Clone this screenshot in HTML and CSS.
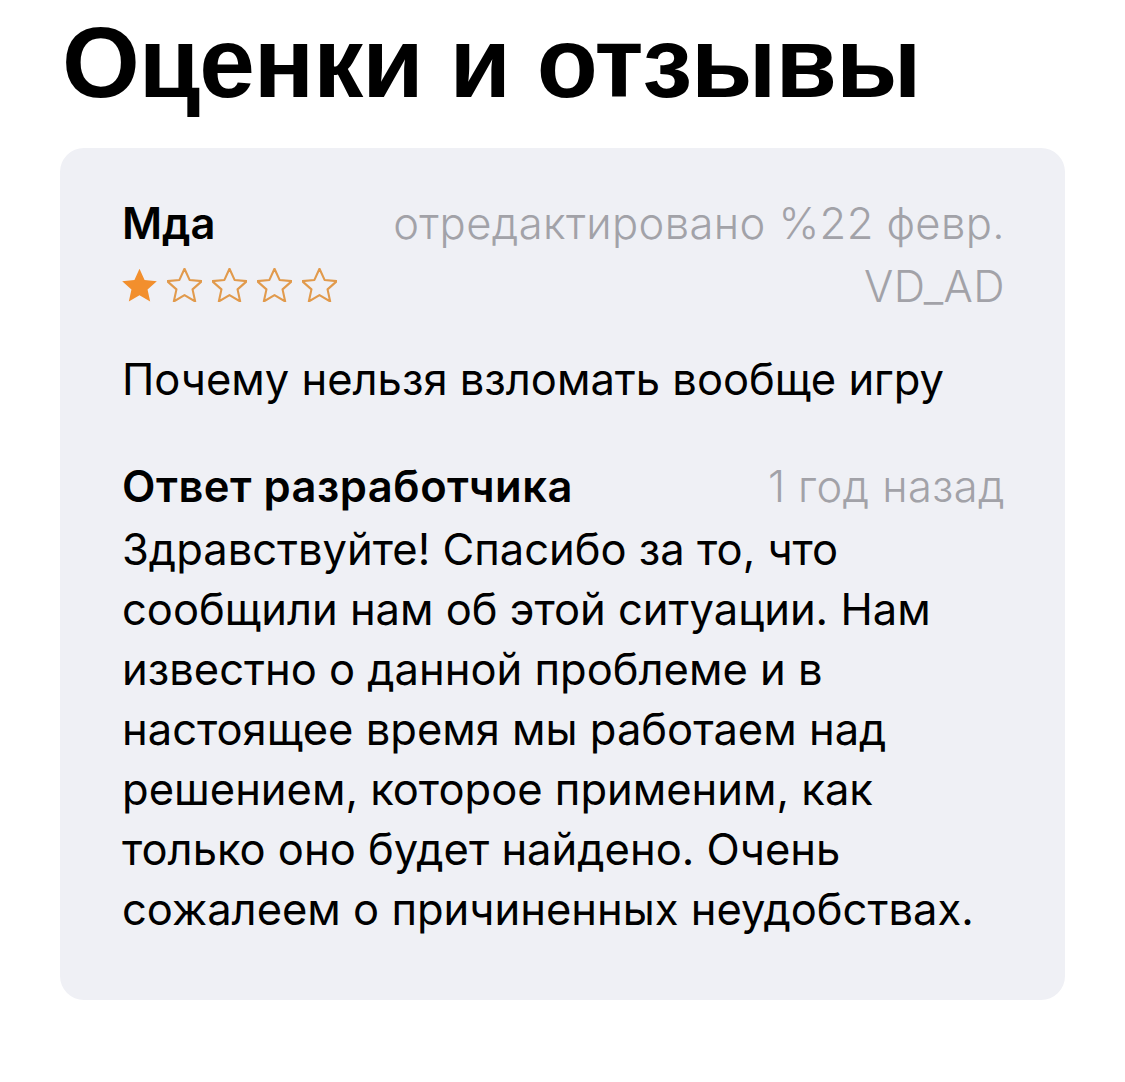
FILE: index.html
```html
<!DOCTYPE html>
<html lang="ru">
<head>
    <meta charset="UTF-8">
    <meta name="viewport" content="width=device-width, initial-scale=1.0">
    <title>Оценки и отзывы</title>
    <link rel="stylesheet" href="styles.css">
</head>
<body>
    <h1 class="page-title">Оценки и отзывы</h1>

    <div class="review-card">
        <div class="review-head">
            <div class="review-left">
                <div class="review-title">Мда</div>
                <div class="stars">
                    <svg class="star" viewBox="2 2 20 19"><path class="full" d="M12 2.2l2.9 6.4 7 .7-5.3 4.7 1.5 6.9L12 17.3l-6.1 3.6 1.5-6.9L2.1 9.3l7-.7z"/></svg>
                    <svg class="star" viewBox="2 2 20 19"><path class="empty" d="M12 2.2l2.9 6.4 7 .7-5.3 4.7 1.5 6.9L12 17.3l-6.1 3.6 1.5-6.9L2.1 9.3l7-.7z"/></svg>
                    <svg class="star" viewBox="2 2 20 19"><path class="empty" d="M12 2.2l2.9 6.4 7 .7-5.3 4.7 1.5 6.9L12 17.3l-6.1 3.6 1.5-6.9L2.1 9.3l7-.7z"/></svg>
                    <svg class="star" viewBox="2 2 20 19"><path class="empty" d="M12 2.2l2.9 6.4 7 .7-5.3 4.7 1.5 6.9L12 17.3l-6.1 3.6 1.5-6.9L2.1 9.3l7-.7z"/></svg>
                    <svg class="star" viewBox="2 2 20 19"><path class="empty" d="M12 2.2l2.9 6.4 7 .7-5.3 4.7 1.5 6.9L12 17.3l-6.1 3.6 1.5-6.9L2.1 9.3l7-.7z"/></svg>
                </div>
            </div>
            <div class="review-meta">
                <div>отредактировано %22 февр.</div>
                <div>VD_AD</div>
            </div>
        </div>

        <p class="review-text">Почему нельзя взломать вообще игру</p>

        <div class="reply-head">
            <span class="reply-title">Ответ разработчика</span>
            <span class="reply-date">1 год назад</span>
        </div>
        <p class="reply-text">Здравствуйте! Спасибо за то, что сообщили нам об этой ситуации. Нам известно о данной проблеме и в настоящее время мы работаем над решением, которое применим, как только оно будет найдено. Очень сожалеем о причиненных неудобствах.</p>
    </div>
</body>
</html>
```

FILE: styles.css
```css
body {
    margin: 0;
    padding: 0;
    background-color: #fff;
    font-family: Inter, Roboto, "Liberation Sans", sans-serif;
    color: #000;
}

.page-title {
    margin: 0;
    padding: 7px 0 0 62px;
    height: 134px;
    box-sizing: border-box;
    font-family: "Liberation Sans", Arial, sans-serif;
    font-weight: bold;
    font-size: 100px;
    line-height: 110px;
    letter-spacing: -1px;
}

.review-card {
    width: 1005px;
    height: 852px;
    box-sizing: border-box;
    margin: 14px 0 0 60px;
    padding: 44px 60px 0 62px;
    background-color: #eff0f5;
    border-radius: 24px;
    font-size: 43.5px;
}

.review-head {
    display: flex;
    justify-content: space-between;
}

.review-title {
    font-weight: 600;
    line-height: 63px;
}

.stars {
    display: flex;
    gap: 10px;
    margin-top: 13px;
}

.star {
    width: 35px;
    height: 34px;
}

.star .full {
    fill: #f28f2d;
}

.star .empty {
    fill: none;
    stroke: #e19a4c;
    stroke-width: 1.2;
    stroke-linejoin: round;
}

.review-meta {
    text-align: right;
    color: #a2a2a8;
    font-weight: 300;
    line-height: 63px;
    letter-spacing: 0.4px;
}

.review-text {
    margin: 31px 0 0;
    line-height: 60px;
}

.reply-head {
    display: flex;
    justify-content: space-between;
    margin-top: 45px;
    line-height: 65px;
}

.reply-title {
    font-weight: 600;
    letter-spacing: 0.5px;
}

.reply-date {
    color: #a2a2a8;
    font-weight: 300;
    letter-spacing: 0.4px;
}

.reply-text {
    margin: 0;
    line-height: 60px;
}
```
